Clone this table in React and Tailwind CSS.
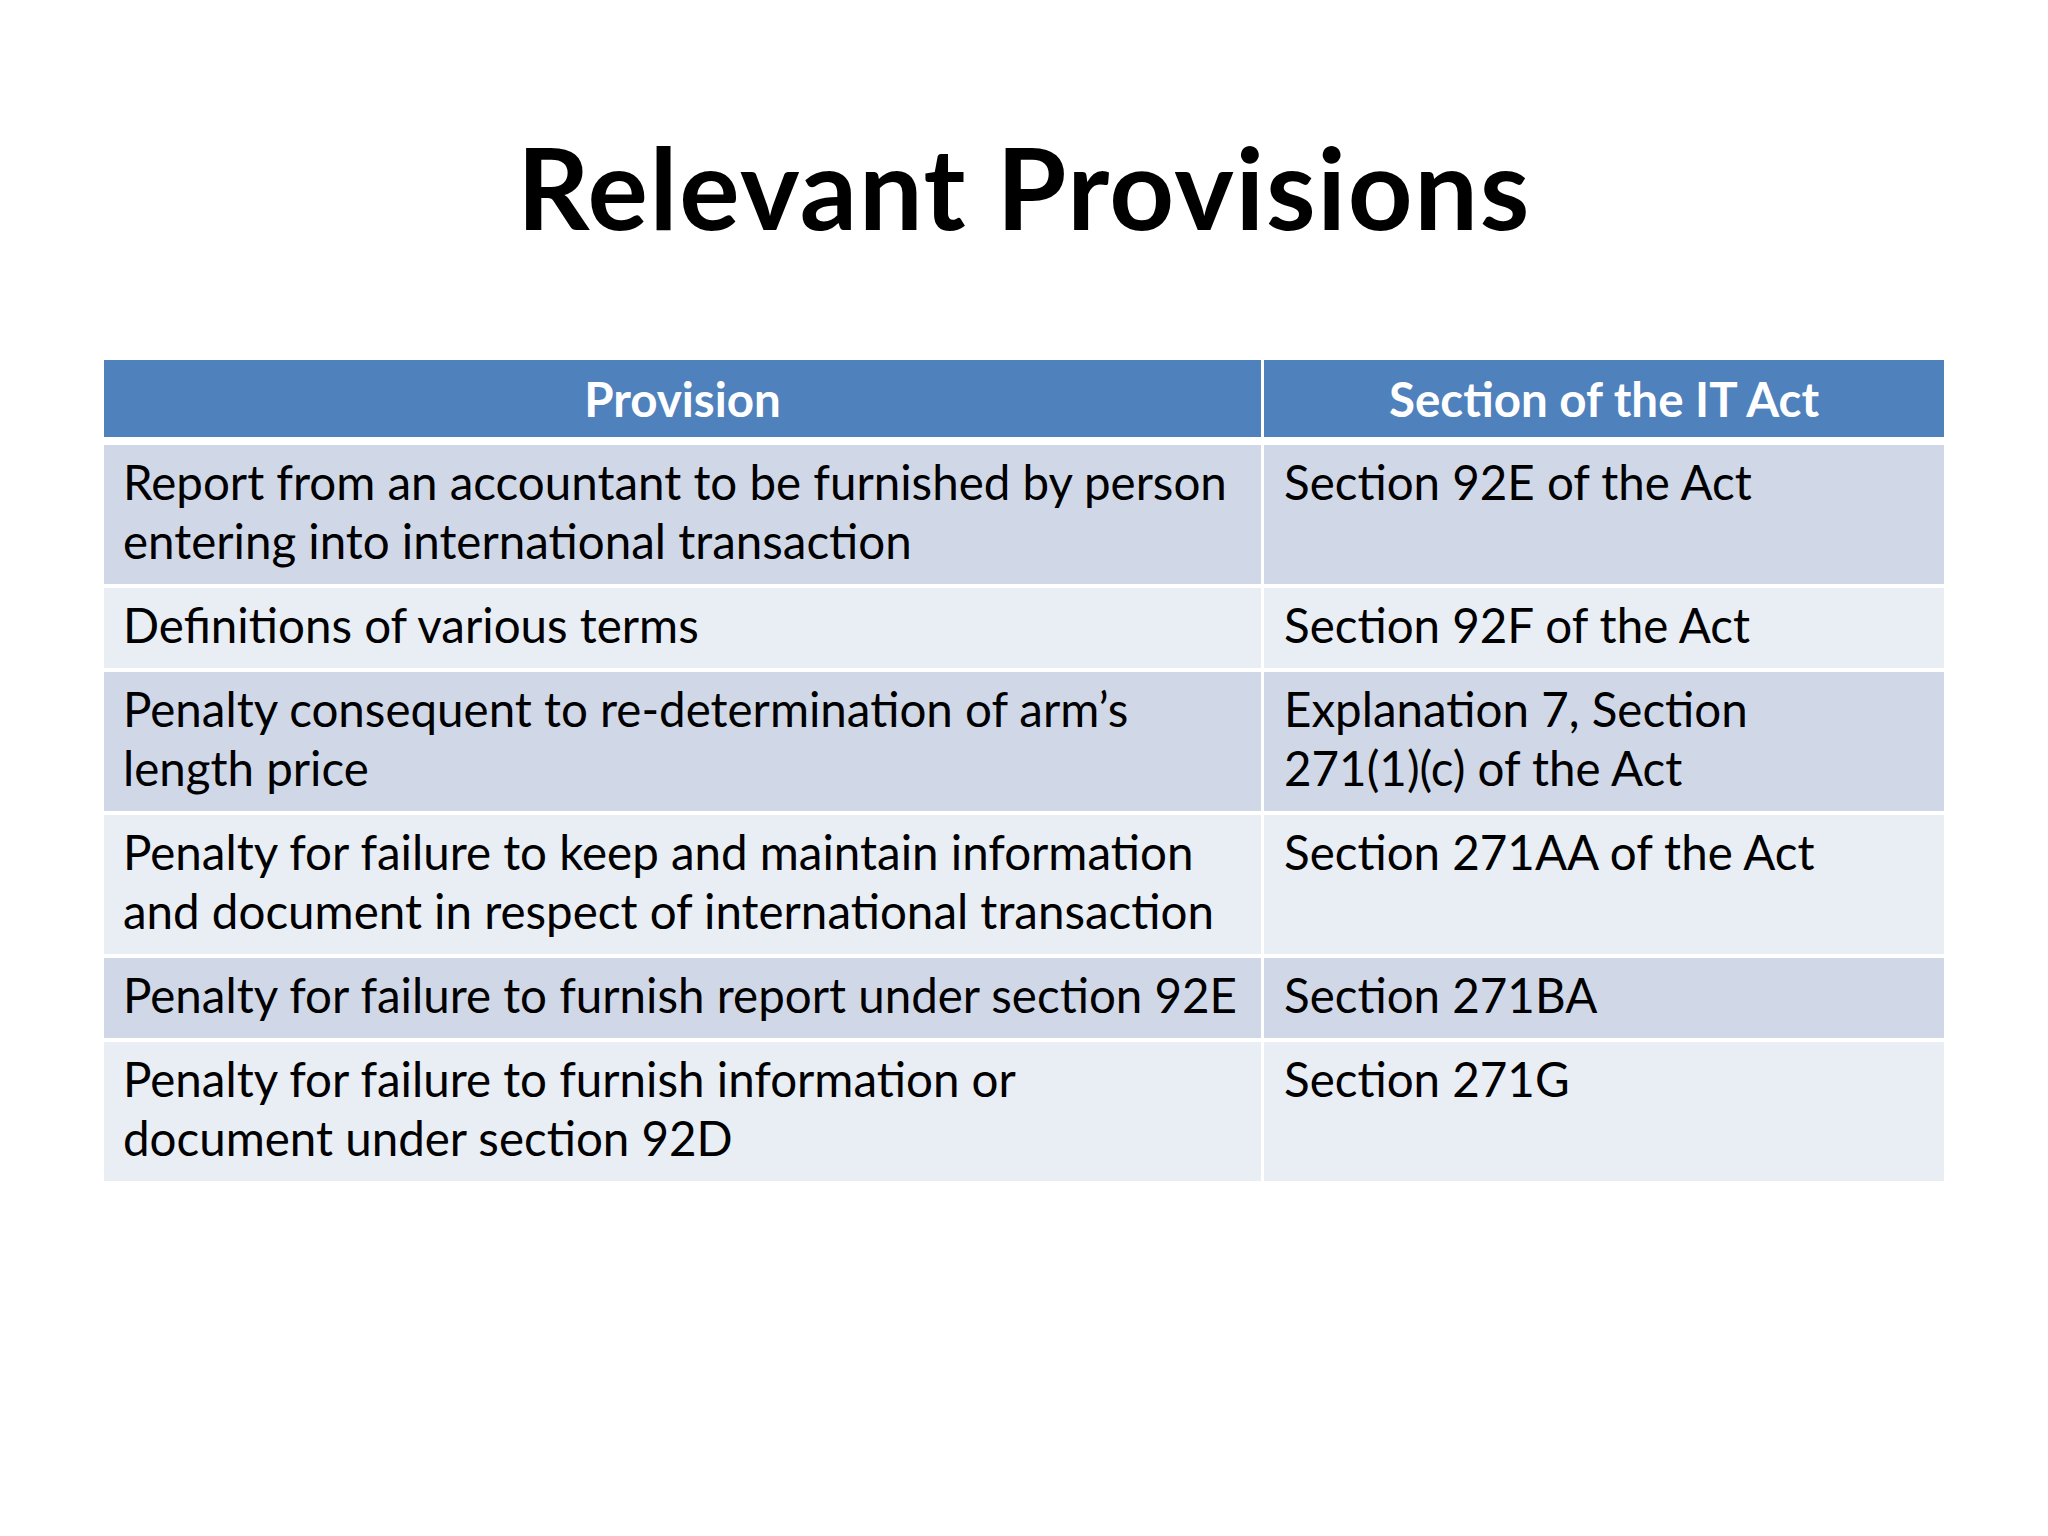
import React from 'react';

const rows = [
  {
    provision: ['Report from an accountant to be furnished by person', 'entering into international transaction'],
    section: ['Section 92E of the Act'],
  },
  {
    provision: ['Definitions of various terms'],
    section: ['Section 92F of the Act'],
  },
  {
    provision: ['Penalty consequent to re-determination of arm’s', 'length price'],
    section: ['Explanation 7, Section', '271(1)(c) of the Act'],
  },
  {
    provision: ['Penalty for failure to keep and maintain information', 'and document in respect of international transaction'],
    section: ['Section 271AA of the Act'],
  },
  {
    provision: ['Penalty for failure to furnish report under section 92E'],
    section: ['Section 271BA'],
  },
  {
    provision: ['Penalty for failure to furnish information or', 'document under section 92D'],
    section: ['Section 271G'],
  },
];

const Lines = ({ lines }) => (
  <>
    {lines.map((line, i) => (
      <div key={i} className="whitespace-nowrap">
        {line}
      </div>
    ))}
  </>
);

const App = () => {
  return (
    <div className="w-[2048px] h-[1536px] bg-white font-['Lato',sans-serif] text-black overflow-hidden">
      <h1 className="pt-[130px] text-center text-[113px] leading-none font-bold tracking-[0.015em]">
        Relevant Provisions
      </h1>

      <div className="mt-[117px] ml-[104px] w-[1840px] flex flex-col">
        {/* header */}
        <div className="grid grid-cols-[1157px_680px] gap-x-[3px] bg-white">
          <div className="bg-[#4f81bd] text-white font-bold text-[47.5px] leading-[59px] pt-[9px] pb-[9px] text-center">
            Provision
          </div>
          <div className="bg-[#4f81bd] text-white font-bold text-[47.5px] leading-[59px] pt-[9px] pb-[9px] text-center">
            Section of the IT Act
          </div>
        </div>

        <div className="mt-[8px] flex flex-col gap-y-[4px]">
          {rows.map((row, i) => {
            const bg = i % 2 === 0 ? 'bg-[#d0d8e8]' : 'bg-[#e9edf4]';
            return (
              <div key={i} className="grid grid-cols-[1157px_680px] gap-x-[3px]">
                <div className={`${bg} text-[47.5px] leading-[59px] pt-[7px] pb-[14px] px-[19px]`}>
                  <Lines lines={row.provision} />
                </div>
                <div className={`${bg} text-[47.5px] leading-[59px] pt-[7px] pb-[14px] px-[20px]`}>
                  <Lines lines={row.section} />
                </div>
              </div>
            );
          })}
        </div>
      </div>
    </div>
  );
};

export default App;
